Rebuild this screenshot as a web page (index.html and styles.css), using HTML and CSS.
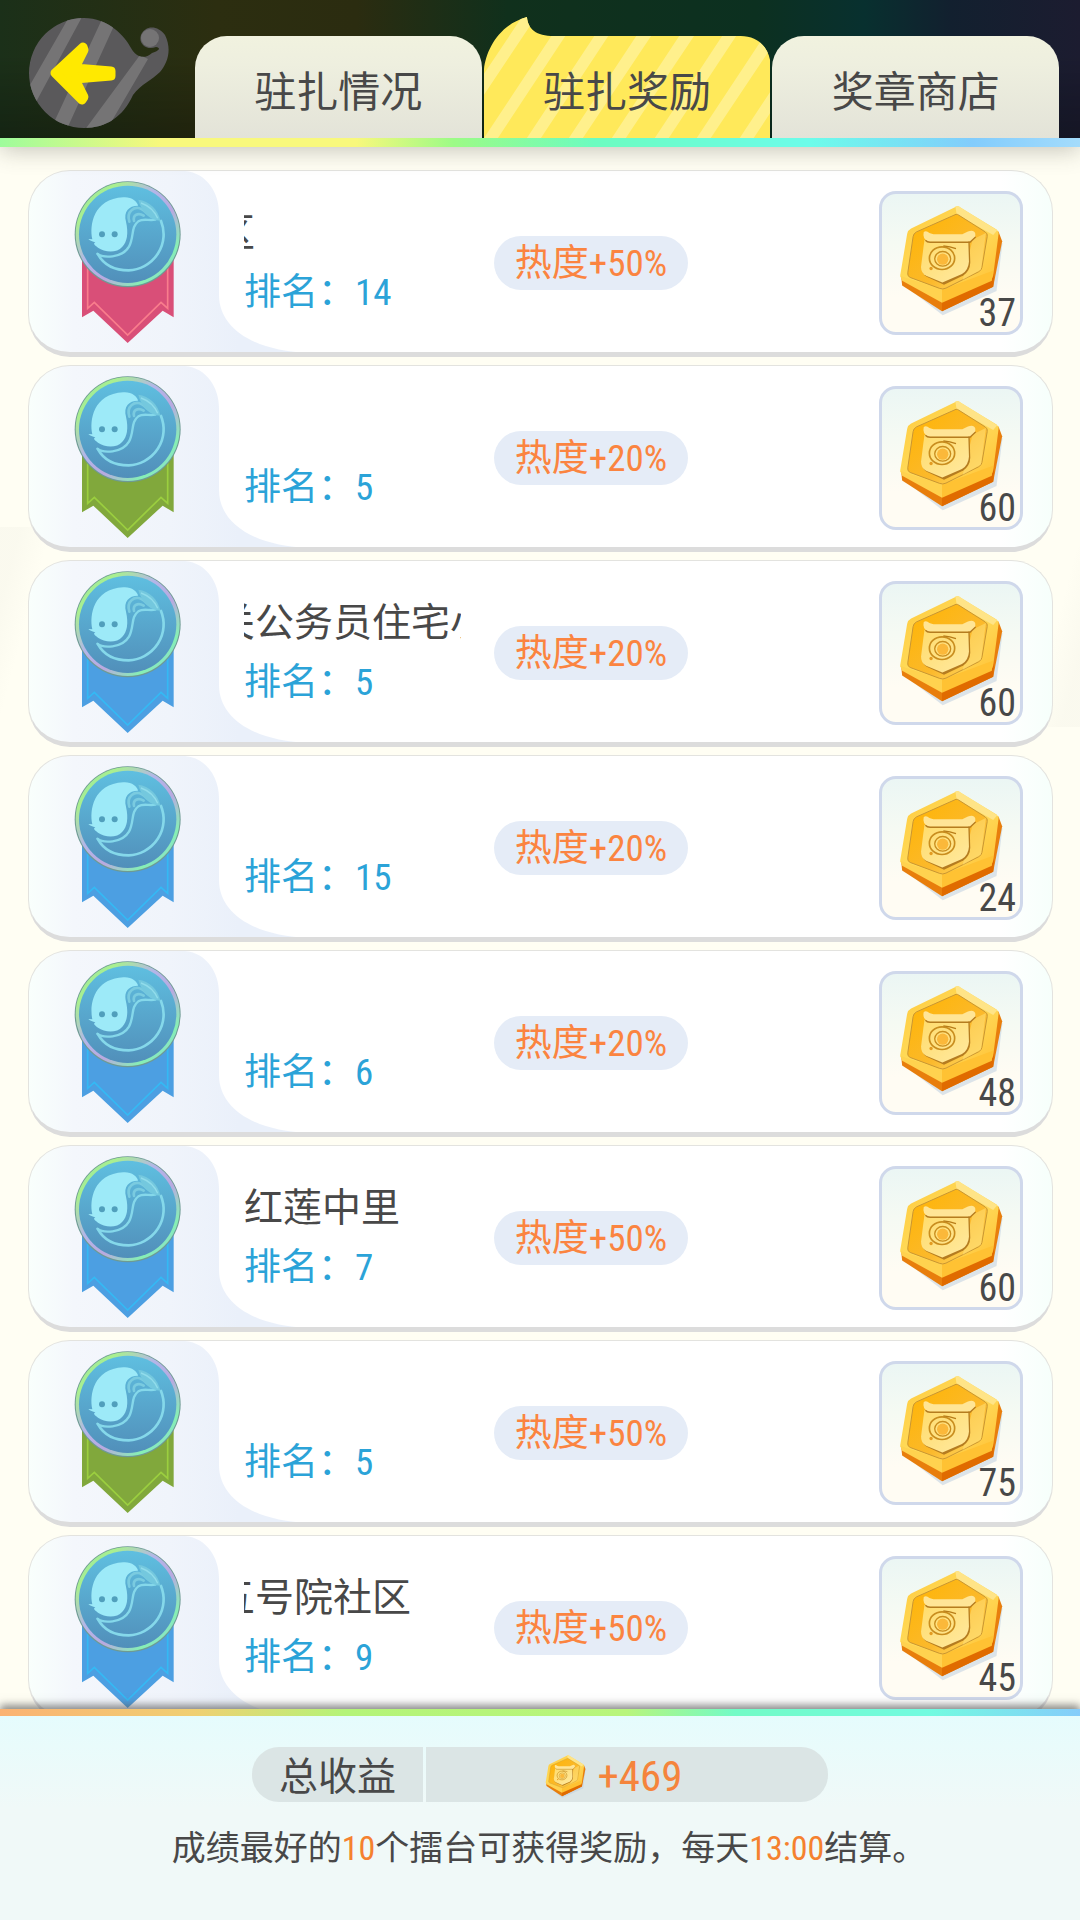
FILE: index.html
```
<!DOCTYPE html>
<html lang="zh-CN">
<head>
<meta charset="utf-8">
<meta name="viewport" content="width=device-width, initial-scale=1">
<title>驻扎奖励</title>
<link rel="stylesheet" href="styles.css">
</head>
<body>
<svg class="sprites" aria-hidden="true">
  <defs>
    <linearGradient id="disc" x1="0" y1="0" x2="0" y2="1"><stop offset="0" stop-color="#5fbfe0"/><stop offset="1" stop-color="#518fba"/></linearGradient>
    <linearGradient id="rim" x1="0" y1="0" x2="1" y2="1"><stop offset="0" stop-color="#8fe3b0"/><stop offset=".2" stop-color="#a9f08e"/><stop offset=".42" stop-color="#b3b6e8"/><stop offset=".6" stop-color="#b9a9e0"/><stop offset=".8" stop-color="#86f0b4"/><stop offset="1" stop-color="#8cc8ea"/></linearGradient>
    <linearGradient id="face" x1="0" y1="0" x2="1" y2="1"><stop offset="0" stop-color="#ffb400"/><stop offset=".6" stop-color="#fbb92c"/><stop offset="1" stop-color="#ffdf70"/></linearGradient>
    <linearGradient id="edge" x1="0" y1="0" x2="1" y2="1"><stop offset="0" stop-color="#ffc93c"/><stop offset=".5" stop-color="#ffdc5c"/><stop offset="1" stop-color="#ffbe30"/></linearGradient>
    <linearGradient id="pot" x1="0" y1="0" x2="1" y2="1"><stop offset="0" stop-color="#ffdc6c"/><stop offset="1" stop-color="#ffe9a0"/></linearGradient>
    <clipPath id="drop"><path d="M58 1C82 1 99 19 105 31C110 40 118 43 126 36C132 34 136 31 130 30C120 34 112 26 115 18C119 8 132 8 139 18C146 32 142 46 134 55C126 63 115 67 107 78C97 100 80 111 58 111A55 55 0 0 1 58 1Z"/></clipPath>
    <clipPath id="horn"><path d="M0 121V52C2 34 14 8 43 0C44 12 52 19 70 19H257C275 19 287 32 287 50V121Z"/></clipPath>
  </defs>
  <symbol id="medal" viewBox="20 15 324 495">
    <path d="M44 250V427L78 407L181 504L286 407L319 427V250Z" fill="currentColor"/>
    <path class="ribbon-line" d="M61 250V400L81 382L181 480L281 382L301 400V250" fill="none" stroke-width="5"/>
    <circle cx="181" cy="178" r="159" fill="#6e9a93"/>
    <circle cx="181" cy="177" r="156" fill="url(#rim)"/>
    <circle cx="181" cy="178" r="146" fill="url(#disc)"/>
    <g fill="none" stroke="#85d8ea" stroke-width="7" stroke-linecap="round">
      <path d="M90 236C106 249 164 251 185 215C201 186 190 155 213 139C229 129 244 138 264 134"/>
      <path stroke-width="8" d="M92 238C112 274 148 286 184 286A110 108 0 0 0 281 138"/>
    </g>
    <g fill="none" stroke="#7acbe0" stroke-width="8" stroke-linecap="round">
      <path d="M186 140C176 108 203 91 224 103C236 110 243 121 258 128"/>
      <path d="M200 138C196 119 212 112 229 122"/>
    </g>
    <path d="M213 74C245 77 273 104 279 137C249 136 222 111 213 74Z" fill="#74c8de"/>
    <path d="M221 84C244 92 262 109 271 130" fill="none" stroke="#91dceb" stroke-width="4"/>
    <path d="M63 192L75 193C66 152 77 72 168 67C192 65 210 79 212 92C184 92 168 110 176 140C184 176 179 200 165 215C148 235 112 232 92 218C80 209 77 206 84 202C76 200 69 197 63 192Z" fill="#9deaf8"/>
    <circle cx="104" cy="178" r="9" fill="#519fbc"/><circle cx="142" cy="178" r="9" fill="#519fbc"/>
  </symbol>
  <symbol id="coin" viewBox="110 70 330 340">
    <path d="M140 322L250 408L412 335L430 190Z" fill="#b9cbe0" opacity=".5"/>
    <path d="M125 290L128 318L248 396L402 322L429 185L418 156Z" fill="#e87e0c"/>
    <path d="M248 352V396L402 322L405 282Z" fill="#e06b00"/>
    <path d="M293 80Q298 79 304 84L412 150Q420 156 418 164L402 288Q401 297 393 300L256 350Q248 353 240 347L128 298Q120 293 123 283L143 163Q145 152 155 147Z" fill="url(#edge)"/>
    <path d="M123 290L248 330V370L128 304Z" fill="#ffd24f"/>
    <path d="M248 330L401 274L398 304L248 370Z" fill="#ffc233"/>
    <path d="M288 80L298 80L414 152L402 166L292 104Z" fill="#ffe487"/>
    <path d="M290 104Q294 103 299 107L378 157Q386 162 384 171L368 264Q367 272 358 277L260 326Q250 331 241 327L152 294Q143 290 145 280L161 171Q162 162 171 157Z" fill="url(#face)" stroke="#c99632" stroke-width="3"/>
    <path d="M340 180L380 160L365 270L310 302Z" fill="#ffe078" opacity=".55"/>
    <path d="M199 184L331 184L333 250Q332 275 312 288L254 316L202 292Q187 283 188 264Z" fill="#b57c20"/>
    <path d="M195 181L327 181L329 246Q328 271 308 284L249 309L200 289Q184 280 185 261Z" fill="url(#pot)"/>
    <path d="M193 157Q201 152 210 160L222 164H309L326 156Q344 149 348 162Q350 174 340 181L334 186H207Q188 178 193 157Z" fill="#ffe596"/>
    <path d="M198 182Q203 188 212 188H332L349 172" fill="none" stroke="#b57c20" stroke-width="4"/>
    <g fill="none" stroke="#c98d1e"><ellipse cx="248" cy="236" rx="38" ry="34" stroke-width="5"/><ellipse cx="250" cy="238" rx="24" ry="22" stroke-width="4"/></g>
    <circle cx="250" cy="239" r="17" fill="#fbb83a"/>
    <path d="M252 199Q272 201 290 207" fill="none" stroke="#b87c18" stroke-width="4"/><circle cx="215" cy="267" r="5" fill="#e49c22"/>
  </symbol>
</svg>

<header class="top">
  <button class="back" type="button" aria-label="返回">
    <svg viewBox="0 0 145 114" width="145" height="114">
      <g clip-path="url(#drop)">
        <path d="M0 0H145V114H0Z" fill="#5a595b"/>
        <path d="M43 0H56L3 98L-4 82ZM77 0H92L40 114H24ZM114 38L122 42L80 114H58Z" fill="#757475"/>
      </g>
      <circle cx="124" cy="21" r="9" fill="#757475"/>
      <path d="M29 56L57 30L58 33L49 51L85 54V59L49 62L58 80L56 83Z" fill="#ffe900" stroke="#ffe900" stroke-width="9" stroke-linejoin="round"/>
    </svg>
  </button>
  <nav class="tabs">
    <a class="tab" href="#status">驻扎情况</a>
    <a class="tab current" href="#rewards" aria-current="page">
      <svg class="tab-shape" viewBox="0 0 287 121" preserveAspectRatio="none" aria-hidden="true">
        <g clip-path="url(#horn)">
          <path d="M0 0H287V121H0Z" fill="#ffe95a"/>
          <path d="M38 0H52L-29 121H-43ZM80 0H94L14 121H0ZM123 0H137L57 121H43ZM165 0H180L99 121H85ZM208 0H223L142 121H128ZM251 0H265L185 121H171ZM293 0H308L227 121H213ZM336 0H350L270 121H256Z" fill="#fff08c"/>
        </g>
      </svg>
      <span class="tab-text">驻扎奖励</span>
    </a>
    <a class="tab" href="#shop">奖章商店</a>
  </nav>
</header>

<main class="list">
  <article class="card">
    <svg class="medal red" aria-hidden="true"><use href="#medal"/></svg>
    <div class="place"><h2 class="name scrolled">区</h2><p class="rank">排名：14</p></div>
    <span class="heat">热度+50%</span>
    <div class="reward"><svg class="coin" aria-hidden="true"><use href="#coin"/></svg><span class="count">37</span></div>
  </article>
  <article class="card">
    <svg class="medal green" aria-hidden="true"><use href="#medal"/></svg>
    <div class="place"><h2 class="name"></h2><p class="rank">排名：5</p></div>
    <span class="heat">热度+20%</span>
    <div class="reward"><svg class="coin" aria-hidden="true"><use href="#coin"/></svg><span class="count">60</span></div>
  </article>
  <article class="card">
    <svg class="medal blue" aria-hidden="true"><use href="#medal"/></svg>
    <div class="place"><h2 class="name scrolled">关公务员住宅小</h2><p class="rank">排名：5</p></div>
    <span class="heat">热度+20%</span>
    <div class="reward"><svg class="coin" aria-hidden="true"><use href="#coin"/></svg><span class="count">60</span></div>
  </article>
  <article class="card">
    <svg class="medal blue" aria-hidden="true"><use href="#medal"/></svg>
    <div class="place"><h2 class="name"></h2><p class="rank">排名：15</p></div>
    <span class="heat">热度+20%</span>
    <div class="reward"><svg class="coin" aria-hidden="true"><use href="#coin"/></svg><span class="count">24</span></div>
  </article>
  <article class="card">
    <svg class="medal blue" aria-hidden="true"><use href="#medal"/></svg>
    <div class="place"><h2 class="name"></h2><p class="rank">排名：6</p></div>
    <span class="heat">热度+20%</span>
    <div class="reward"><svg class="coin" aria-hidden="true"><use href="#coin"/></svg><span class="count">48</span></div>
  </article>
  <article class="card">
    <svg class="medal blue" aria-hidden="true"><use href="#medal"/></svg>
    <div class="place"><h2 class="name">红莲中里</h2><p class="rank">排名：7</p></div>
    <span class="heat">热度+50%</span>
    <div class="reward"><svg class="coin" aria-hidden="true"><use href="#coin"/></svg><span class="count">60</span></div>
  </article>
  <article class="card">
    <svg class="medal green" aria-hidden="true"><use href="#medal"/></svg>
    <div class="place"><h2 class="name"></h2><p class="rank">排名：5</p></div>
    <span class="heat">热度+50%</span>
    <div class="reward"><svg class="coin" aria-hidden="true"><use href="#coin"/></svg><span class="count">75</span></div>
  </article>
  <article class="card">
    <svg class="medal blue" aria-hidden="true"><use href="#medal"/></svg>
    <div class="place"><h2 class="name scrolled">五号院社区</h2><p class="rank">排名：9</p></div>
    <span class="heat">热度+50%</span>
    <div class="reward"><svg class="coin" aria-hidden="true"><use href="#coin"/></svg><span class="count">45</span></div>
  </article>
</main>

<footer class="summary">
  <div class="total">
    <span class="total-label">总收益</span>
    <span class="total-value"><svg class="coin-small" aria-hidden="true"><use href="#coin"/></svg>+469</span>
  </div>
  <p class="note">成绩最好的<em>10</em>个擂台可获得奖励，每天<em>13:00</em>结算。</p>
</footer>
</body>
</html>
```
FILE: styles.css
```
* { box-sizing: border-box; }

body {
  margin: 0;
  height: 100vh;
  display: flex;
  flex-direction: column;
  font-family: "Roboto Condensed", "Noto Sans CJK SC", sans-serif;
  color: #484848;
  background: #fffef3;
}

h2, p { margin: 0; font-weight: 400; }
em { font-style: normal; color: #f5812f; }

.sprites { position: absolute; width: 0; height: 0; }

/* Header */
.top {
  position: relative;
  z-index: 1;
  flex: none;
  display: flex;
  justify-content: space-between;
  align-items: flex-end;
  height: 147px;
  padding-right: 21px;
  border-bottom: 9px solid;
  border-image: linear-gradient(90deg, #9dfc9c, #f8f87c 15%, #f8f87c 33%, #9cfb86 42%, #6cfcc0 55%, #6cfcea 75%, #82ccfc 90%, #a4dcfc) 1;
  background:
    linear-gradient(180deg, rgba(0, 0, 0, 0) 40%, rgba(0, 0, 0, .25)),
    linear-gradient(90deg, #1b3019, #2c2e10 20%, #2b2c10 33%, #10301c 47%, #0c3020 70%, #08302f 80%, #12202f 88%, #1c1c30);
  box-shadow: 0 3px 22px rgba(60, 60, 50, .3);
}

.back {
  flex: none;
  width: 195px;
  height: 138px;
  padding: 17px 26px 7px;
  border: 0;
  background: none;
  text-align: left;
}
.back svg { display: block; }

.tabs { flex: 1; display: flex; gap: 2px; align-items: flex-end; }

.tab {
  flex: 1;
  position: relative;
  height: 102px;
  padding-top: 12px;
  border-radius: 32px 32px 0 0;
  background: linear-gradient(#f1f2df, #eeefdf 28%, #e3e3d8);
  color: #484848;
  font-size: 42px;
  line-height: 90px;
  text-align: center;
  text-decoration: none;
}
.tab.current { background: none; }
.tab-shape { position: absolute; left: 0; bottom: 0; width: 100%; height: 121px; }
.tab-text { position: relative; }

/* Reward list */
.list {
  flex: 1;
  min-height: 0;
  overflow-y: auto;
  scrollbar-width: none;
  display: flex;
  flex-direction: column;
  gap: 8px;
  padding: 23px 27px 0 28px;
  background:
    linear-gradient(105deg, rgba(190, 190, 180, .07) 20px, transparent 50px) 0 380px / 100% 220px no-repeat,
    linear-gradient(285deg, rgba(190, 190, 180, .07) 18px, transparent 50px) 0 400px / 100% 180px no-repeat,
    #fffef3;
}

.card {
  flex: none;
  display: flex;
  align-items: flex-start;
  min-height: 187px;
  padding-right: 29px;
  border: 1px solid #e3e3df;
  border-bottom: 5px solid #dcdcdc;
  border-radius: 42px;
  background:
    url("data:image/svg+xml,%3Csvg xmlns='http://www.w3.org/2000/svg' width='280' height='182'%3E%3Cdefs%3E%3ClinearGradient id='g'%3E%3Cstop stop-color='%23f9fffc'/%3E%3Cstop offset='.16' stop-color='%23f4f7fc'/%3E%3Cstop offset='.5' stop-color='%23f0f4fb'/%3E%3Cstop offset='.75' stop-color='%23eaf0fa'/%3E%3C/linearGradient%3E%3C/defs%3E%3Cpath fill='url(%23g)' d='M0 0H156C178 2 190 22 190 42V124C190 158 226 180 280 182H0Z'/%3E%3C/svg%3E") no-repeat,
    linear-gradient(90deg, #fff 95%, #f6fffb);
}

.medal { flex: none; width: 108px; height: 165px; margin: 9px 62px 0 45px; }
.red { color: #d94f78; --line: #f97d8c; }
.green { color: #81a83c; --line: #9bcf3f; }
.blue { color: #4c9fe2; --line: #34b9f4; }
.ribbon-line { stroke: var(--line); }

.place { flex: 0 1 217px; min-width: 0; padding-top: 32px; }
.name {
  height: 60px;
  overflow: hidden;
  white-space: nowrap;
  font-size: 39px;
  line-height: 60px;
}
.name.scrolled { text-indent: -28px; }
.rank { font-size: 37px; line-height: 60px; color: #2ba3d8; white-space: nowrap; }

.heat {
  flex: none;
  width: 194px;
  height: 54px;
  margin: 65px 0 0 33px;
  border-radius: 27px;
  background: #e5ecf7;
  color: #fb8440;
  font-size: 37px;
  line-height: 56px;
  text-align: center;
}

.reward {
  position: relative;
  flex: none;
  width: 144px;
  height: 144px;
  margin: 20px 0 0 auto;
  padding: 9px 14px;
  border: 3px solid #cfd8eb;
  border-radius: 17px;
  background: linear-gradient(#ebf6f4, #f5faf3 35%, #fffcf3 75%);
}
.coin { display: block; width: 110px; height: 113px; }
.count {
  position: absolute;
  right: 4px;
  bottom: 0;
  font-size: 38px;
  line-height: 38px;
}

/* Summary */
.summary {
  position: relative;
  z-index: 1;
  flex: none;
  display: flex;
  flex-direction: column;
  align-items: center;
  gap: 22px;
  padding: 31px 20px 48px;
  border-top: 7px solid;
  border-image: linear-gradient(90deg, #fbb272, #f0cf72 18%, #b4f478 32%, #b8f57c 58%, #72fbc6 68%, #72fbe0 86%, #86ccfb) 1;
  background: linear-gradient(#e5fcfd, #e9fbfb 15%, #f0f9f8 45%);
  box-shadow: 0 -4px 8px rgba(90, 90, 90, .7);
}

.total { display: flex; gap: 3px; width: 576px; max-width: 100%; height: 55px; line-height: 55px; }
.total-label, .total-value { padding-top: 3px; background: #dbe5e5; }
.total-label {
  flex: 0 0 171px;
  border-radius: 27px 0 0 27px;
  font-size: 39px;
  text-align: center;
}
.total-value {
  flex: 1;
  display: flex;
  align-items: center;
  justify-content: center;
  gap: 10px;
  padding-right: 27px;
  border-radius: 0 27px 27px 0;
  font-size: 43px;
  color: #f5843c;
}
.coin-small { width: 43px; height: 44px; }

.note { padding-left: 18px; font-size: 34px; line-height: 48px; }
```
